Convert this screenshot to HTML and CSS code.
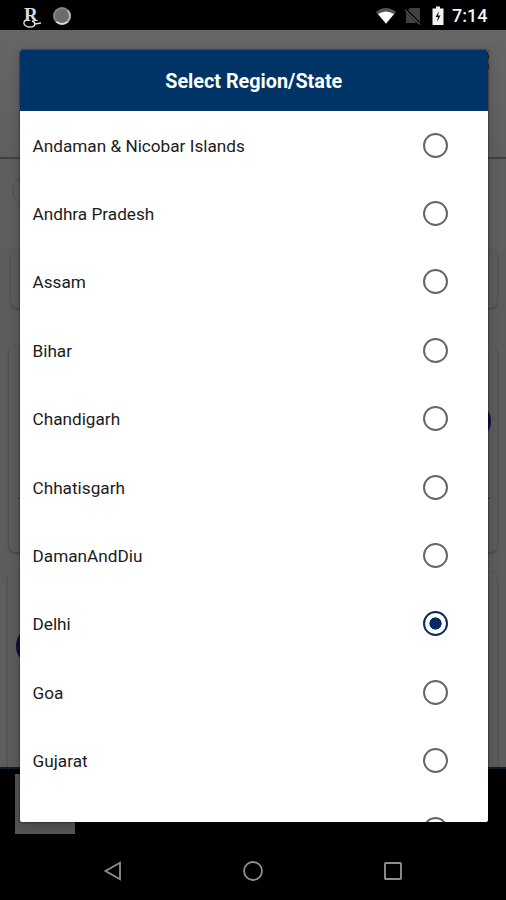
FILE: index.html
```html
<!DOCTYPE html>
<html lang="en">
<head>
<meta charset="utf-8">
<title>Select Region/State</title>
<link rel="stylesheet" href="styles.css">
</head>
<body>
<div class="phone">
  <header class="status">
    <span class="brand">R<svg class="swash" width="20" height="9" viewBox="0 0 20 9"><path d="M4 1C0 3 2 8 8 8C14 8 14 3 10 2M13 5L19 4" fill="none" stroke="#ddd" stroke-width="1.400"/></svg></span>
    <span class="sync"></span>
    <span class="spacer"></span>
    <svg class="wifi" width="22" height="18" viewBox="0 0 22 18"><path d="M1 5Q11-3 21 5L11 17Z" fill="#555"/><path d="M3 7Q11 2 19 7L11 16.500Z" fill="#fff"/></svg>
    <svg class="sim" width="18" height="20" viewBox="0 0 18 20"><path d="M6 2H16V17H2V6Z" fill="#414141"/><path d="M1 3L17 19" stroke="#000" stroke-width="3"/><path d="M1 4L16 18.500" stroke="#555" stroke-width="1.200"/></svg>
    <svg class="battery" width="12" height="20" viewBox="0 0 12 20"><path d="M4 .5H8V2.500H11.500V19H.5V2.500H4Z" fill="#f2f2f2"/><path d="M7 5L3.500 11H6L5 16L8.500 9.500H6Z" fill="#111"/></svg>
    <span class="clock">7:14</span>
  </header>
  <main class="page">
    <div class="topbar"><span class="menu"></span></div>
    <div class="search"><span class="pill"></span></div>
    <div class="card card-short"></div>
    <div class="card card-tall"><span class="badge-right"></span><span class="rule"></span></div>
    <div class="card card-last"><span class="badge-left"></span></div>
  </main>
  <div class="banner"><div class="thumb"></div></div>
  <nav class="nav">
    <svg width="20" height="22" viewBox="0 0 20 22"><path d="M17 2.700V19.300L2.500 11Z" fill="none" stroke="#8e8e8e" stroke-width="1.800"/></svg>
    <svg width="22" height="22" viewBox="0 0 22 22"><circle cx="11" cy="11" r="9" fill="none" stroke="#8e8e8e" stroke-width="1.800"/></svg>
    <svg width="20" height="22" viewBox="0 0 20 22"><rect x="2" y="3" width="16" height="16" rx=".8" fill="none" stroke="#8e8e8e" stroke-width="1.900"/></svg>
  </nav>
  <section class="dialog">
    <h1 class="title">Select Region/State</h1>
    <ul class="list">
      <li class="row"><span>Andaman &amp; Nicobar Islands</span><i class="radio"></i></li>
      <li class="row"><span>Andhra Pradesh</span><i class="radio"></i></li>
      <li class="row"><span>Assam</span><i class="radio"></i></li>
      <li class="row"><span>Bihar</span><i class="radio"></i></li>
      <li class="row"><span>Chandigarh</span><i class="radio"></i></li>
      <li class="row"><span>Chhatisgarh</span><i class="radio"></i></li>
      <li class="row"><span>DamanAndDiu</span><i class="radio"></i></li>
      <li class="row"><span>Delhi</span><i class="radio checked"></i></li>
      <li class="row"><span>Goa</span><i class="radio"></i></li>
      <li class="row"><span>Gujarat</span><i class="radio"></i></li>
      <li class="row"><span></span><i class="radio"></i></li>
    </ul>
  </section>
</div>
</body>
</html>
```
FILE: styles.css
```css
* { box-sizing: border-box; }
body { margin: 0; background: #000; font-family: Roboto, sans-serif; }
.phone { position: relative; width: 506px; height: 900px; overflow: hidden; display: flex; flex-direction: column; background: #000; }

.status { height: 30px; flex: none; display: flex; align-items: center; padding: 2px 18px 0 22px; }
.brand { position: relative; width: 20px; height: 24px; font: bold 19px/22px "Liberation Serif", serif; color: #ddd; padding-left: 2px; }
.swash { position: absolute; left: 0; top: 15px; }
.sync { width: 18px; height: 18px; margin-left: 11px; border-radius: 50%; background: #6c6c6c; border: 2px solid #858585; border-right-color: #bbb; border-bottom-color: #ddd; }
.spacer { flex: 1; }
.wifi { margin-right: 7px; }
.sim { margin-right: 10px; }
.battery { margin-right: 8px; }
.clock { width: 36px; font-size: 18px; font-weight: 500; line-height: 28px; color: #f4f4f4; white-space: nowrap; }

.page { height: 739px; flex: none; background: #5d5d5d; border-bottom: 2px solid #0c1d30; overflow: hidden; }
.topbar { height: 129px; display: flex; justify-content: flex-end; padding: 25px 17px 0 0; background: linear-gradient(#666, #5f5f5f); border-bottom: 2px solid #404044; }
.menu { width: 4px; height: 14px; border-top: 4px solid #222; border-bottom: 5px solid #333; }
.search { height: 91px; padding: 16px 24px 16px 12px; background: #5e5e5e; }
.pill { display: block; height: 32px; border: 1px solid #505050; border-radius: 16px; }
.card { position: relative; margin: 0 9px 0 11px; border-radius: 6px; background: #5c5c5c; box-shadow: 0 1px 3px rgba(0, 0, 0, .32); }
.card-short { height: 58px; }
.card-tall { height: 206px; margin-top: 38px; margin-left: 9px; }
.card-last { height: 220px; margin-top: 20px; margin-left: 8px; }
.badge-right, .badge-left { position: absolute; width: 40px; height: 40px; border-radius: 50%; background: #101040; }
.badge-right { right: 6px; top: 55px; }
.badge-left { left: 8px; top: 54px; }
.rule { position: absolute; left: 9px; right: 7px; top: 152px; height: 1px; background: #333; }

.banner { height: 73px; flex: none; padding: 5px 15px 8px; }
.thumb { width: 60px; height: 60px; background: #555; }
.nav { height: 58px; flex: none; display: flex; justify-content: space-between; align-items: center; padding: 0 103px; }

.dialog { position: absolute; left: 20px; top: 50px; width: 467.5px; height: 772px; border-radius: 2px; overflow: hidden; background: #fff; box-shadow: 0 0 2px rgba(0, 0, 0, .85), 0 3px 12px rgba(0, 0, 0, .22); }
.title { margin: 0; height: 61px; background: #003466; color: #fff; text-align: center; font-size: 19.8px; line-height: 64px; font-weight: 700; }
.list { margin: 0; padding: 0; list-style: none; }
.row { height: 68.4px; padding: 0 39.5px 0 12.5px; display: flex; align-items: center; justify-content: space-between; font-size: 17.2px; line-height: 22px; color: #1c1c1c; }
.row span { padding-top: 1px; }
.radio { width: 25px; height: 25px; border: 2px solid #666; border-radius: 50%; }
.checked { border-color: #082a62; background: radial-gradient(circle, #082a62 5.8px, transparent 6.4px); }
```
